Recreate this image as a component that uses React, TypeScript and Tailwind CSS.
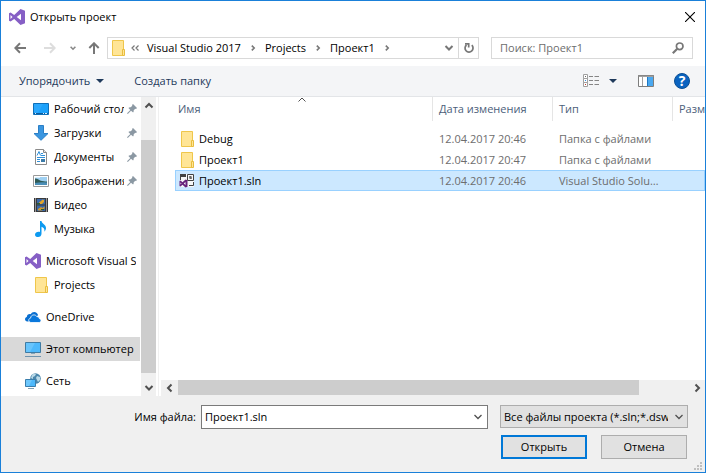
import React from "react";

type IconProps = { className?: string };

const VisualStudioIcon = ({ className = "size-4" }: IconProps) => (
  <svg viewBox="0 0 16 16" className={`${className} shrink-0`} aria-hidden="true">
    <path
      fill="#865fc5"
      fillRule="evenodd"
      d="M11.5 0 16 1.8v12.4L11.5 16 5.2 9.9 1.6 12.6 0 11.8V4.2l1.6-.8 3.6 2.7ZM12 4.7 7.7 8l4.3 3.3ZM1.5 6v4l2-2Z"
    />
  </svg>
);

const FolderIcon = () => (
  <svg viewBox="0 0 14 16" className="h-4 w-3.5 shrink-0" aria-hidden="true">
    <path d="M.5.5h11v15H.5Z" fill="#ffe596" stroke="#efc64b" />
    <path d="M10.500 9.500h2v6h-2Z" fill="#ffe596" stroke="#e9bd3e" />
  </svg>
);

const DesktopIcon = () => (
  <svg viewBox="0 0 16 16" className="size-4 shrink-0" aria-hidden="true">
    <path d="M.5 2.500h15v11H.5Z" fill="#1ba1fb" stroke="#0f6fb8" />
    <path d="M1 12h14v1H1Z" fill="#0b5c9d" />
    <path d="M2 12h1v1H2Zm8 0h1v1h-1Zm2 0h2v1h-2Z" fill="#d7efff" />
    <path d="M1 3h9L5 12H1Z" fill="#3bb0ff" opacity=".5" />
  </svg>
);

const DownloadsIcon = () => (
  <svg viewBox="0 0 16 16" className="size-4 shrink-0" aria-hidden="true">
    <path d="M5.500.5h5v8h4.500L8 15.300 1 8.500h4.500Z" fill="#3a96e0" stroke="#2b7fc6" />
  </svg>
);

const DocumentsIcon = () => (
  <svg viewBox="0 0 16 16" className="size-4 shrink-0" aria-hidden="true">
    <path d="M2.500.5h8l3 3v12h-11Z" fill="#fff" stroke="#8a8a8a" />
    <path d="M10.500.5v3h3" fill="#e4e4e4" stroke="#8a8a8a" />
    <path d="M4 6.500 6 2.500l1.500 4M8 4.500h2M8 6.500h4M4 8.500h8M4 10.500h3M4 12.500h3" fill="none" stroke="#2f8fd8" />
    <path d="M8 10h4v3H8Z" fill="#3b7ba8" />
  </svg>
);

const PicturesIcon = () => (
  <svg viewBox="0 0 16 16" className="size-4 shrink-0" aria-hidden="true">
    <path d="M.5 2.500h15v11H.5Z" fill="#fff" stroke="#9a9a9a" />
    <path d="M2 4h12v8H2Z" fill="#9fd0f2" />
    <path d="M2 5.500c3 0 4 2 7 2.500s4 .5 5 .5v2H2Z" fill="#2f5a55" />
    <path d="M2 10c4-1 8-1 12-.5V12H2Z" fill="#4b8fb8" />
    <path d="M2 4h5v1H2Z" fill="#d8eefb" />
  </svg>
);

const VideoIcon = () => (
  <svg viewBox="0 0 16 16" className="size-4 shrink-0" aria-hidden="true">
    <path d="M1 1h14v14H1Z" fill="#3a3a3a" />
    <path d="M2.500 1.500v14M13.500 1.500v14" stroke="#f1f1f1" strokeDasharray="1 1" />
    <path d="M4 2h8v5.500H4ZM4 8.500h8V14H4Z" fill="#3a68a8" />
    <path d="M6 5.500 8 4l1.500-1.500L11 3v2L9 7H6Z" fill="#e2a62a" />
    <path d="m5 12 3-2 1.500 1 2-1.500v2L9 13.500H5Z" fill="#d39a2e" />
    <path d="M4 6h3v1.500H4ZM8 12h3v1H8Z" fill="#2d5a34" />
  </svg>
);

const MusicIcon = () => (
  <svg viewBox="0 0 16 16" className="size-4 shrink-0" aria-hidden="true">
    <path
      d="M7 0h1.500c.3 2.500 4.500 3.500 4.500 7 0 1.500-.6 2.500-1.600 3.700.4-2.800-.7-4.400-2.900-5v7c0 2-1.400 3.300-3.400 3.300C3.400 16 2 15.100 2 13.700c0-1.800 1.700-3 3.600-3 .5 0 1 .1 1.400.3Z"
      fill="#0d9af0"
    />
  </svg>
);

const OneDriveIcon = () => (
  <svg viewBox="0 0 16 16" className="size-4 shrink-0" aria-hidden="true">
    <path
      d="M3.500 12.500H2.300C.9 12.500 0 11.500 0 10.300c0-1.200.8-2 1.800-2.200 0-1.800 1.300-3 3-3 .4 0 .7 0 1 .2C6.500 3.900 7.700 3 9.200 3c2 0 3.500 1.300 3.900 3.200"
      fill="#0a6fd0"
    />
    <path
      d="M6 13.500c-1.300 0-2.300-1-2.300-2.200 0-1.200.8-2 1.900-2.200.1-1.900 1.500-3.200 3.300-3.200 1.300 0 2.400.7 3 1.700 1.600 0 2.400 1 2.500 2.100.9.100 1.600.9 1.600 1.900s-.8 1.900-1.900 1.900Z"
      fill="#0a78dc"
      stroke="#fff"
      strokeWidth=".8"
    />
  </svg>
);

const ComputerIcon = () => (
  <svg viewBox="0 0 16 16" className="size-4 shrink-0" aria-hidden="true">
    <path d="M.5 1.500h15v10H.5Z" fill="#4db8fb" stroke="#3f7ba3" />
    <path d="M1 2h9l-5 9H1Z" fill="#7accfd" opacity=".6" />
    <path d="M6 12h4v1H6Z" fill="#86a5b9" />
    <path d="M0 15.500h16" stroke="#6f93ad" />
  </svg>
);

const NetworkIcon = () => (
  <svg viewBox="0 0 16 16" className="size-4 shrink-0" aria-hidden="true">
    <circle cx="10.500" cy="5.500" r="5.300" fill="#4a86ab" />
    <path d="M7 2c1-1 3-1.500 4-1l-1 2-2 1v2L6 5Zm5 1 3 1v3l-2 2-1-2-1-2Z" fill="#b9d9e8" />
    <path d="M.5 6.500h10v7H.5Z" fill="#4db8fb" stroke="#3a7dab" />
    <path d="M1 7h6l-3 6H1Z" fill="#83d0fd" opacity=".6" />
    <path d="M3 15.500h6" stroke="#7f9fb3" />
  </svg>
);

const SolutionIcon = () => (
  <svg viewBox="0 0 16 16" className="size-4 shrink-0" aria-hidden="true">
    <path d="M1 1h14v13H1Z" fill="#f6f6f6" />
    <path d="M1 1h6v3H1Z" fill="#424242" />
    <path d="M1.500 4v3M8.500 1.500h6v6h-6ZM14.500 9v3.500H10" fill="none" stroke="#424242" />
    <path d="M12.500 3.500h-2v1h2v1h-2" fill="none" stroke="#424242" strokeWidth=".8" />
    <path d="m6.500 6.500 2 .8v6.400l-2 .8-3-2.700L1.500 13.500.5 13V8l1-.5 2 1.700ZM6.500 9 4.800 10.500 6.500 12ZM1.500 9.500v2l1-1Z" fill="#68217a" fillRule="evenodd" />
  </svg>
);

const PinIcon = () => (
  <svg viewBox="0 0 10 10" className="mr-[3px] ml-[3px] size-2.5 shrink-0" aria-hidden="true">
    <path d="M6 0 10 4 9 5 8.300 4.700 6.700 6.300c.2 1 0 1.700-.6 2.300L4 6.700.8 10 0 9.200 3.300 6 1.400 3.900c.6-.6 1.300-.8 2.300-.6L5.300 1.700 5 1Z" fill="#8b98a3" />
  </svg>
);

const Chevron = ({ d, className, color = "#505050", width = 1.5 }: { d: string; className: string; color?: string; width?: number }) => (
  <svg viewBox="0 0 10 10" className={`${className} shrink-0`} fill="none" stroke={color} strokeWidth={width} aria-hidden="true">
    <path d={d} />
  </svg>
);

const DOWN = "m1.500 3 3.500 3.500L8.500 3";
const UP = "M1.500 6.500 5 3l3.500 3.500";
const LEFT = "M6.500 1.500 3 5l3.500 3.500";
const RIGHT = "M3.500 1.500 7 5 3.500 8.500";

const ArrowIcon = ({ d, color }: { d: string; color: string }) => (
  <svg viewBox="0 0 12 12" className="size-3" fill="none" stroke={color} strokeWidth="2" aria-hidden="true">
    <path d={d} />
  </svg>
);

type TreeItem = { label: string; icon: React.ReactNode; pinned?: boolean; root?: boolean; active?: boolean };

const tree: TreeItem[][] = [
  [
    { label: "Рабочий стол", icon: <DesktopIcon />, pinned: true },
    { label: "Загрузки", icon: <DownloadsIcon />, pinned: true },
    { label: "Документы", icon: <DocumentsIcon />, pinned: true },
    { label: "Изображения", icon: <PicturesIcon />, pinned: true },
    { label: "Видео", icon: <VideoIcon /> },
    { label: "Музыка", icon: <MusicIcon /> },
  ],
  [
    { label: "Microsoft Visual Studio", icon: <VisualStudioIcon />, root: true },
    { label: "Projects", icon: <FolderIcon /> },
  ],
  [{ label: "OneDrive", icon: <OneDriveIcon />, root: true }],
  [{ label: "Этот компьютер", icon: <ComputerIcon />, root: true, active: true }],
  [{ label: "Сеть", icon: <NetworkIcon />, root: true }],
];

const files = [
  { name: "Debug", date: "12.04.2017 20:46", type: "Папка с файлами", icon: <FolderIcon />, selected: false },
  { name: "Проект1", date: "12.04.2017 20:47", type: "Папка с файлами", icon: <FolderIcon />, selected: false },
  { name: "Проект1.sln", date: "12.04.2017 20:46", type: "Visual Studio Solution", icon: <SolutionIcon />, selected: true },
];

function TitleBar() {
  return (
    <header className="flex h-8 items-center pr-1.5 pl-2">
      <VisualStudioIcon />
      <h1 className="ml-[5px] flex-1">Открыть проект</h1>
      <button type="button" aria-label="Закрыть" className="p-1">
        <svg viewBox="0 0 10 10" className="size-2.5" stroke="#000" strokeWidth="1.100" aria-hidden="true">
          <path d="m0 0 10 10M10 0 0 10" />
        </svg>
      </button>
    </header>
  );
}

function NavigationBar() {
  return (
    <nav className="mt-1 mb-[7px] flex h-[22px] items-center pr-3">
      <div className="flex w-[106px] items-center pl-[13px]">
        <button type="button" aria-label="Назад">
          <ArrowIcon d="M12 6H1.500M6 1.300 1.300 6 6 10.700" color="#777" />
        </button>
        <button type="button" aria-label="Вперед" className="ml-[18px]">
          <ArrowIcon d="M0 6h10.500M6 1.300 10.700 6 6 10.700" color="#ddd" />
        </button>
        <button type="button" aria-label="Последние расположения" className="ml-[13px]">
          <Chevron d="m2 3.500 3 3 3-3" className="size-2" color="#888" width={2} />
        </button>
        <button type="button" aria-label="Вверх" className="ml-[11px]">
          <ArrowIcon d="M6 12V1.500M1.300 6 6 1.300 10.700 6" color="#777" />
        </button>
      </div>
      <div className="flex h-full flex-1 items-center border border-[#d9d9d9] pl-1">
        <FolderIcon />
        <svg viewBox="0 0 8 6" className="ml-[5px] h-1.5 w-2" fill="none" stroke="#777" strokeWidth="1.200" aria-hidden="true">
          <path d="M3.500.5 1 3l2.500 2.500M7.500.5 5 3l2.500 2.500" />
        </svg>
        <ol className="ml-2 flex flex-1 items-center">
          {["Visual Studio 2017", "Projects", "Проект1"].map((crumb) => (
            <li key={crumb} className="flex items-center">
              <a href="#" className="whitespace-nowrap">
                {crumb}
              </a>
              <Chevron d="m3.500 2 3 3-3 3" className="mx-2 size-2" color="#777" width={2} />
            </li>
          ))}
        </ol>
        <button type="button" aria-label="Предыдущие расположения" className="mr-1">
          <Chevron d={DOWN} className="size-2.5" color="#777" width={2} />
        </button>
        <button type="button" aria-label="Обновить" className="flex h-full w-5 items-center justify-center border-l border-[#d9d9d9]">
          <svg viewBox="0 0 12 12" className="size-3" fill="none" stroke="#777" strokeWidth="1.700" aria-hidden="true">
            <path d="M8.800 3.200a4 4 0 1 1-5.300-.2" />
            <path d="M2 1.800h3.700v3.700" />
          </svg>
        </button>
      </div>
      <div className="ml-3 flex h-full w-[202px] items-center border border-[#d9d9d9] pr-2 pl-2">
        <input
          type="search"
          aria-label="Поиск"
          placeholder="Поиск: Проект1"
          className="w-full min-w-0 flex-1 outline-none placeholder:text-[#6d6d6d]"
        />
        <svg viewBox="0 0 12 12" className="size-3 shrink-0" fill="none" stroke="#777" aria-hidden="true">
          <circle cx="7.700" cy="4.300" r="3.300" strokeWidth="1.700" />
          <path d="M5.300 6.700.8 11.200" strokeWidth="2.200" />
        </svg>
      </div>
    </nav>
  );
}

function Toolbar() {
  return (
    <div role="toolbar" className="flex h-[31px] items-center border-b border-[#e3e5e8] bg-[#f4f5f7] pr-[15px] pl-[18px] text-[#1e395b]">
      <button type="button" className="flex items-center gap-1.5">
        Упорядочить
        <svg viewBox="0 0 8 4" className="h-1 w-2" fill="#1e395b" aria-hidden="true">
          <path d="M0 0h8L4 4Z" />
        </svg>
      </button>
      <button type="button" className="ml-[30px]">
        Создать папку
      </button>
      <div className="flex-1" />
      <button type="button" aria-label="Вид" className="flex items-center gap-2.5">
        <svg viewBox="0 0 16 14" className="h-3.5 w-4" fill="none" aria-hidden="true">
          <path d="M.5.5h4v4h-4Zm0 4h4v4h-4Zm0 4h4v4h-4Z" fill="#fff" stroke="#a0a0a0" />
          <path d="M2 2h1v1H2Z" fill="#666" />
          <path d="M2 6h1v1H2Z" fill="#2e8ae6" />
          <path d="M2 10h1v1H2Z" fill="#c0392b" />
          <path d="M6 2.500h4m1.500 0H16M6 6.500h4m1.500 0H16M6 10.500h4m1.500 0H16" stroke="#858585" />
        </svg>
        <svg viewBox="0 0 8 4" className="h-1 w-2" fill="#1e395b" aria-hidden="true">
          <path d="M0 0h8L4 4Z" />
        </svg>
      </button>
      <button type="button" aria-label="Область просмотра" className="ml-[21px]">
        <svg viewBox="0 0 16 12" className="h-3 w-4" aria-hidden="true">
          <path d="M.5.5h15v11H.5Z" fill="#fff" stroke="#7d7d7d" />
          <path d="M0 0h16v2H0ZM4 2h1v9H4Z" fill="#8a8a8a" opacity=".8" />
          <path d="M9 2h6v9H9Z" fill="#4aa8f0" />
          <path d="M9.500 2v9" stroke="#1f78c4" />
        </svg>
      </button>
      <button type="button" aria-label="Справка" className="ml-5 flex size-4 items-center justify-center rounded-full border border-[#0b4f94] bg-[#0a63c0] text-sm leading-4 font-bold text-white">
        ?
      </button>
    </div>
  );
}

function Sidebar() {
  return (
    <aside className="flex w-[158px] shrink-0 border-r border-[#f0f0f0]">
      <div className="flex min-w-0 flex-1 flex-col gap-2">
        {tree.map((group, index) => (
          <ul key={index}>
            {group.map((item) => (
              <li key={item.label} className={item.active ? "bg-[#d9d9d9]" : ""}>
                <a href="#" className={`flex h-6 items-center ${item.root ? "pr-1 pl-6" : "pl-8"}`}>
                  <span className="mr-[5px] flex w-4 shrink-0 justify-end">{item.icon}</span>
                  <span className="min-w-0 flex-1 overflow-hidden whitespace-nowrap">{item.label}</span>
                  {item.pinned && <PinIcon />}
                </a>
              </li>
            ))}
          </ul>
        ))}
      </div>
      <div className="mr-0.5 ml-px flex w-[15px] flex-col bg-[#f0f0f0]">
        <button type="button" aria-label="Прокрутить вверх" className="flex h-[43px] justify-center pt-1">
          <Chevron d={UP} className="size-2.5" width={2} />
        </button>
        <div className="flex-1 bg-[#cdcdcd]" />
        <button type="button" aria-label="Прокрутить вниз" className="flex h-[23px] items-center justify-center pt-1.5">
          <Chevron d={DOWN} className="size-2.5" width={2} />
        </button>
      </div>
    </aside>
  );
}

function FileList() {
  const head = "h-6 border-r border-[#e5e5e5] text-left font-normal";
  return (
    <section className="flex min-w-0 flex-1 flex-col">
      <div className="relative flex-1 overflow-hidden pl-4">
        <Chevron d={UP} className="absolute top-[-2px] left-[138px] size-2.5" width={1} />
        <table className="w-full table-fixed border-separate border-spacing-0 whitespace-nowrap">
          <colgroup>
            <col />
            <col className="w-[120px]" />
            <col className="w-[120px]" />
            <col className="w-8" />
          </colgroup>
          <thead className="text-[#4c607a]">
            <tr>
              <th className={`${head} pl-[3px]`}>Имя</th>
              <th className={`${head} pl-1.5`}>Дата изменения</th>
              <th className={`${head} pl-1.5`}>Тип</th>
              <th className="overflow-hidden pl-1.5 text-left font-normal">Размер</th>
            </tr>
          </thead>
          <tbody className="text-[#6d6d6d]">
            <tr className="h-[7px]" aria-hidden="true" />
            {files.map((file) => (
              <tr key={file.name} className={`h-[21px] ${file.selected ? "bg-[#cce8ff] outline outline-[#99d1ff] -outline-offset-1" : ""}`}>
                <td className="pl-1 text-black">
                  <span className="flex items-center">
                    <span className="mr-1 flex w-4 shrink-0 justify-end">{file.icon}</span>
                    {file.name}
                  </span>
                </td>
                <td className="pl-1.5">{file.date}</td>
                <td className="overflow-hidden pr-3 pl-1.5 text-ellipsis">{file.type}</td>
                <td />
              </tr>
            ))}
          </tbody>
        </table>
      </div>
      <div className="ml-0.5 flex h-4 bg-[#f0f0f0]">
        <button type="button" aria-label="Прокрутить влево" className="flex w-[17px] items-center justify-center">
          <Chevron d={LEFT} className="size-2.5" width={2} />
        </button>
        <div className="mb-px flex-1 bg-[#cdcdcd]" />
        <button type="button" aria-label="Прокрутить вправо" className="flex w-[66px] items-center justify-end pr-[3px]">
          <Chevron d={RIGHT} className="size-2.5" width={2} />
        </button>
      </div>
    </section>
  );
}

function Footer() {
  return (
    <footer className="relative flex flex-col gap-1.5 bg-[#f0f0f0] pt-[9px] pr-[17px] pb-[13px]">
      <div className="flex items-start">
        <label htmlFor="filename" className="w-[200px] shrink-0 pr-[5px] text-right leading-6">
          Имя файла:
        </label>
        <div className="flex h-6 flex-1 items-center border border-[#7a7a7a] bg-white pr-1 pl-[3px]">
          <input id="filename" defaultValue="Проект1.sln" className="min-w-0 flex-1 outline-none" />
          <Chevron d={DOWN} className="size-2.5" width={1.3} />
        </div>
        <div className="relative ml-3 w-[188px]">
          <select aria-label="Тип файлов" className="h-[23px] w-full appearance-none border border-[#adadad] bg-[#e1e1e1] pr-[19px] pl-[3px]">
            <option>Все файлы проекта (*.sln;*.dsw;*.vcw)</option>
          </select>
          <Chevron d={DOWN} className="pointer-events-none absolute top-[7px] right-1 size-2.5" width={1.3} />
        </div>
      </div>
      <div className="flex justify-end gap-3.5 pr-px">
        <button type="submit" className="h-6 w-[86px] border-2 border-[#0078d7] bg-[#e1e1e1]">
          Открыть
        </button>
        <button type="button" className="h-6 w-[86px] border border-[#adadad] bg-[#e1e1e1]">
          Отмена
        </button>
      </div>
      <svg viewBox="0 0 8 8" className="absolute right-[3px] bottom-0.5 size-2" fill="#bfbfbf" aria-hidden="true">
        <path d="M6 0h2v2H6ZM3 3h2v2H3Zm3 0h2v2H6ZM0 6h2v2H0Zm3 0h2v2H3Zm3 0h2v2H6Z" />
      </svg>
    </footer>
  );
}

export default function App() {
  return (
    <div className="flex min-h-screen flex-col border border-[#1a80d9] bg-white font-['Open_Sans','Noto_Sans',sans-serif] text-[11px] leading-4 text-black">
      <TitleBar />
      <NavigationBar />
      <Toolbar />
      <main className="flex flex-1">
        <Sidebar />
        <FileList />
      </main>
      <Footer />
    </div>
  );
}
